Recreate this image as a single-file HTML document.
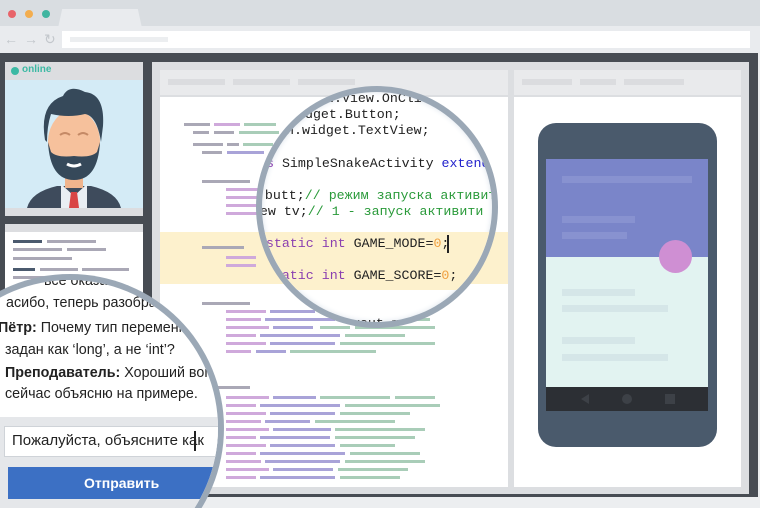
<!DOCTYPE html><html style="width:760px;height:508px;overflow:hidden"><head><meta charset="utf-8"><style>
*{margin:0;padding:0;box-sizing:border-box}
body{width:760px;height:508px;overflow:hidden;background:#eceef0;font-family:"Liberation Sans",sans-serif}
#w{position:relative;width:760px;height:508px;overflow:hidden}
.a{position:absolute}
.b{position:absolute;height:3px}
.mono{font-family:"Liberation Mono",monospace;font-size:13.3px;white-space:pre;color:#222}
.g{background:#aaa8b6}.p{background:#cfa9db}.gr{background:#a9cdb8}.v{background:#a9a3d8}.d{background:#4b5a6e}
</style></head><body><div id="w">
<div class="a" style="left:0;top:0;width:760px;height:28px;background:#d9dde1"></div>
<div class="a" style="left:8px;top:10px;width:8px;height:8px;border-radius:50%;background:#e8646a"></div>
<div class="a" style="left:25px;top:10px;width:8px;height:8px;border-radius:50%;background:#f3ad4e"></div>
<div class="a" style="left:42px;top:10px;width:8px;height:8px;border-radius:50%;background:#3fb5a0"></div>
<div class="a" style="left:58px;top:9px;width:84px;height:19px;background:#e9ebee;clip-path:polygon(5% 0,95% 0,100% 100%,0 100%)"></div>
<div class="a" style="left:0;top:26px;width:760px;height:27px;background:#e9ebee"></div>
<div class="a" style="left:4px;top:31px;font-size:14px;color:#c3c7cc;letter-spacing:6px">←→↻</div>
<div class="a" style="left:62px;top:31px;width:688px;height:17px;background:#fff"></div>
<div class="a" style="left:70px;top:37px;width:98px;height:5px;background:#eceef0"></div>
<div class="a" style="left:0;top:53px;width:758px;height:444px;background:#474c53"></div>
<div class="a" style="left:5px;top:62px;width:138px;height:154px;background:#d4ebf6"></div>
<div class="a" style="left:5px;top:62px;width:138px;height:18px;background:#dcdde0"></div>
<div class="a" style="left:11px;top:67px;width:8px;height:8px;border-radius:50%;background:#3cb9a4"></div>
<div class="a" style="left:22px;top:64px;font-size:10px;font-weight:bold;color:#3cb9a4">online</div>
<svg class="a" style="left:5px;top:80px" width="138" height="128" viewBox="0 0 138 128">
<path d="M22 128 Q26 112 52 106 L86 106 Q112 112 116 128Z" fill="#3e4b5c"/>
<path d="M56 104 L69 116 L82 104 L82 128 L56 128Z" fill="#e9eef3"/>
<path d="M66 112 L72 112 L74 128 L64 128Z" fill="#d94545"/>
<rect x="60" y="88" width="18" height="20" fill="#f0b48d"/>
<ellipse cx="69" cy="62" rx="26" ry="32" fill="#f6c19c"/>
<path d="M43 62 Q45 100 69 100 Q93 100 95 62 L92 72 Q86 78 69 76 Q52 78 46 72Z" fill="#36495a"/>
<path d="M40 60 Q34 24 58 16 Q64 4 80 12 Q100 14 98 46 L96 62 Q92 36 80 34 Q64 38 46 34 Q42 46 42 62Z" fill="#36495a"/>
<path d="M55 55 q5 -4 10 0 M73 55 q5 -4 10 0" stroke="#c58a66" stroke-width="2" fill="none"/>
<path d="M62 84 q7 4 14 0" stroke="#fff" stroke-width="3" fill="none"/>
</svg>
<div class="a" style="left:5px;top:208px;width:138px;height:8px;background:#dcdde0"></div>
<div class="a" style="left:5px;top:224px;width:138px;height:272px;background:#fff"></div>
<div class="a" style="left:5px;top:224px;width:138px;height:8px;background:#dcdde0"></div>
<div class="b d" style="left:13px;top:240px;width:29px"></div><div class="b g" style="left:47px;top:240px;width:49px"></div>
<div class="b g" style="left:13px;top:248px;width:49px"></div><div class="b g" style="left:67px;top:248px;width:39px"></div>
<div class="b g" style="left:13px;top:257px;width:59px"></div>
<div class="b d" style="left:13px;top:268px;width:22px"></div><div class="b g" style="left:40px;top:268px;width:38px"></div><div class="b g" style="left:82px;top:268px;width:47px"></div>
<div class="b g" style="left:13px;top:276px;width:36px"></div>
<div class="b d" style="left:13px;top:288px;width:30px"></div>
<div class="a" style="left:152px;top:62px;width:597px;height:432px;background:#dcdee1"></div>
<div class="a" style="left:160px;top:70px;width:348px;height:25px;background:#e9eaec"></div>
<div class="a" style="left:168px;top:79px;width:57px;height:6px;background:#dbdcdf"></div>
<div class="a" style="left:233px;top:79px;width:57px;height:6px;background:#dbdcdf"></div>
<div class="a" style="left:298px;top:79px;width:57px;height:6px;background:#dbdcdf"></div>
<div class="a" style="left:160px;top:97px;width:348px;height:390px;background:#fff"></div>
<div class="a" style="left:160px;top:232px;width:348px;height:52px;background:#fdf1cd"></div>
<div class="a" style="left:514px;top:70px;width:227px;height:25px;background:#e9eaec"></div>
<div class="a" style="left:522px;top:79px;width:50px;height:6px;background:#dbdcdf"></div>
<div class="a" style="left:580px;top:79px;width:36px;height:6px;background:#dbdcdf"></div>
<div class="a" style="left:624px;top:79px;width:60px;height:6px;background:#dbdcdf"></div>
<div class="a" style="left:514px;top:97px;width:227px;height:390px;background:#fff"></div>
<div class="b g" style="left:184px;top:123px;width:26px"></div><div class="b p" style="left:214px;top:123px;width:26px"></div><div class="b gr" style="left:244px;top:123px;width:32px"></div>
<div class="b g" style="left:193px;top:131px;width:16px"></div><div class="b g" style="left:214px;top:131px;width:20px"></div><div class="b gr" style="left:239px;top:131px;width:40px"></div>
<div class="b g" style="left:193px;top:143px;width:30px"></div><div class="b g" style="left:227px;top:143px;width:12px"></div><div class="b gr" style="left:243px;top:143px;width:30px"></div>
<div class="b g" style="left:202px;top:151px;width:20px"></div><div class="b v" style="left:227px;top:151px;width:37px"></div>
<div class="b g" style="left:202px;top:180px;width:48px"></div>
<div class="b p" style="left:226px;top:188px;width:35px"></div><div class="b p" style="left:226px;top:196px;width:35px"></div><div class="b p" style="left:226px;top:204px;width:35px"></div><div class="b p" style="left:226px;top:212px;width:35px"></div>
<div class="b g" style="left:202px;top:246px;width:42px"></div>
<div class="b p" style="left:226px;top:256px;width:30px"></div><div class="b p" style="left:226px;top:264px;width:30px"></div>
<div class="b g" style="left:202px;top:302px;width:48px"></div>
<div class="b g" style="left:202px;top:386px;width:48px"></div>
<div id="bars"></div>
<script>
var h='',rows=[[310,[[226,40,'p'],[270,45,'v'],[320,60,'gr'],[384,50,'gr']]],[318,[[226,35,'p'],[265,70,'v'],[340,90,'gr']]],[326,[[226,43,'p'],[273,40,'v'],[320,30,'gr'],[355,80,'gr']]],[334,[[226,30,'p'],[260,80,'v'],[345,60,'gr']]],[342,[[226,40,'p'],[270,65,'v'],[340,95,'gr']]],[350,[[226,25,'p'],[256,30,'v'],[290,86,'gr']]],
[396,[[226,43,'p'],[273,43,'v'],[320,70,'gr'],[395,40,'gr']]],[404,[[226,30,'p'],[260,80,'v'],[345,95,'gr']]],[412,[[226,40,'p'],[270,65,'v'],[340,70,'gr']]],[420,[[226,35,'p'],[265,45,'v'],[315,80,'gr']]],[428,[[226,43,'p'],[273,58,'v'],[335,90,'gr']]],[436,[[226,30,'p'],[260,70,'v'],[335,80,'gr']]],[444,[[226,40,'p'],[270,65,'v'],[340,55,'gr']]],[452,[[226,30,'p'],[260,85,'v'],[350,70,'gr']]],[460,[[226,35,'p'],[265,75,'v'],[345,80,'gr']]],[468,[[226,43,'p'],[273,60,'v'],[338,70,'gr']]],[476,[[226,30,'p'],[260,75,'v'],[340,60,'gr']]]];
rows.forEach(function(r){r[1].forEach(function(s){h+='<div class="b '+s[2]+'" style="left:'+s[0]+'px;top:'+r[0]+'px;width:'+s[1]+'px"></div>'})});
document.getElementById('bars').innerHTML=h;
</script>
<div class="a" style="left:538px;top:123px;width:179px;height:324px;border-radius:18px;background:#4a5a6c"></div>
<div class="a" style="left:546px;top:159px;width:162px;height:98px;background:#7a85c9"></div>
<div class="a" style="left:562px;top:176px;width:130px;height:7px;background:#8892d0"></div>
<div class="a" style="left:562px;top:216px;width:73px;height:7px;background:#8892d0"></div>
<div class="a" style="left:562px;top:232px;width:65px;height:7px;background:#8892d0"></div>
<div class="a" style="left:546px;top:257px;width:162px;height:130px;background:#e2f3f1"></div>
<div class="a" style="left:562px;top:289px;width:73px;height:7px;background:#d5e6e8"></div>
<div class="a" style="left:562px;top:305px;width:106px;height:7px;background:#d5e6e8"></div>
<div class="a" style="left:562px;top:337px;width:73px;height:7px;background:#d5e6e8"></div>
<div class="a" style="left:562px;top:354px;width:106px;height:7px;background:#d5e6e8"></div>
<div class="a" style="left:659px;top:240px;width:33px;height:33px;border-radius:50%;background:#cf8fd3"></div>
<div class="a" style="left:546px;top:387px;width:162px;height:24px;background:#2c2f34"></div>
<div class="a" style="left:581px;top:394px;width:0;height:0;border-top:5px solid transparent;border-bottom:5px solid transparent;border-right:8px solid #3d4147"></div>
<div class="a" style="left:622px;top:394px;width:10px;height:10px;border-radius:50%;background:#3d4147"></div>
<div class="a" style="left:665px;top:394px;width:10px;height:10px;background:#3d4147"></div>
<div class="a" style="left:256px;top:86px;width:242px;height:242px;border-radius:50%;overflow:hidden;background:#fff;border:6px solid #9ba8b6;box-shadow:inset 0 0 6px #dde4ec">
 <div class="a" style="left:-262px;top:-92px;width:760px;height:508px">
  <div class="a" style="left:0;top:232px;width:508px;height:58px;background:#fdf1cd"></div>
  <div class="a mono" style="left:326px;top:91px">w.View.OnClickListener;</div>
  <div class="a mono" style="left:289px;top:107px">widget.Button;</div>
  <div class="a mono" style="left:286px;top:123px">n.widget.TextView;</div>
  <div class="a mono" style="left:258px;top:156px"><span style="color:#8a3fb0">ss</span> SimpleSnakeActivity <span style="color:#2222cc">extends</span></div>
  <div class="a mono" style="left:209px;top:188px">Button butt;<span style="color:#2a9a3a">// режим запуска активити</span></div>
  <div class="a mono" style="left:212px;top:204px">TextView tv;<span style="color:#2a9a3a">// 1 - запуск активити</span></div>
  <div class="a mono" style="left:210px;top:236px"><span style="color:#8a3fb0">public static int</span> GAME_MODE=<span style="color:#f0a040">0</span>;</div>
  <div class="a mono" style="left:210px;top:268px"><span style="color:#8a3fb0">public static int</span> GAME_SCORE=<span style="color:#f0a040">0</span>;</div>
  <div class="a mono" style="left:320px;top:316px">R.layout.main(R</div>
 </div>
</div>
<div class="a" style="left:447px;top:235px;width:2px;height:18px;background:#222"></div>
<div class="a" style="left:0;top:274px;width:224px;height:234px;background:#9ba8b6;clip-path:circle(154px at 70px 154px)"></div>
<div class="a" style="left:0;top:274px;width:224px;height:234px;overflow:hidden;background:#fff;clip-path:circle(148px at 70px 154px)">
 <div class="a" style="left:0;top:-274px;width:224px;height:508px;font-size:14.3px;color:#222;line-height:20px">
  <div class="a" style="left:0;top:417px;width:224px;height:91px;background:#e5e7ea"></div>
  <div class="a" style="left:44px;top:271px;white-space:nowrap">все оказал</div>
  <div class="a" style="left:6px;top:293px;white-space:nowrap">асибо, теперь разобрал</div>
  <div class="a" style="left:-2px;top:318px;white-space:nowrap"><b>Пётр:</b> Почему тип переменной</div>
  <div class="a" style="left:5px;top:340px;white-space:nowrap">задан как ‘long’, а не ‘int’?</div>
  <div class="a" style="left:5px;top:363px;white-space:nowrap"><b>Преподаватель:</b> Хороший вопрос</div>
  <div class="a" style="left:5px;top:384px;white-space:nowrap">сейчас объясню на примере.</div>
  <div class="a" style="left:4px;top:426px;width:220px;height:31px;background:#fff;border:1px solid #cfd3d8"></div>
  <div class="a" style="left:12px;top:431px;white-space:nowrap;font-size:15px">Пожалуйста, объясните как</div>
  <div class="a" style="left:194px;top:431px;width:2px;height:20px;background:#222"></div>
  <div class="a" style="left:8px;top:467px;width:216px;height:32px;background:#3c70c4"></div>
  <div class="a" style="left:84px;top:473px;color:#fff;font-weight:bold;font-size:14px">Отправить</div>
 </div>
</div>
</div></body></html>
